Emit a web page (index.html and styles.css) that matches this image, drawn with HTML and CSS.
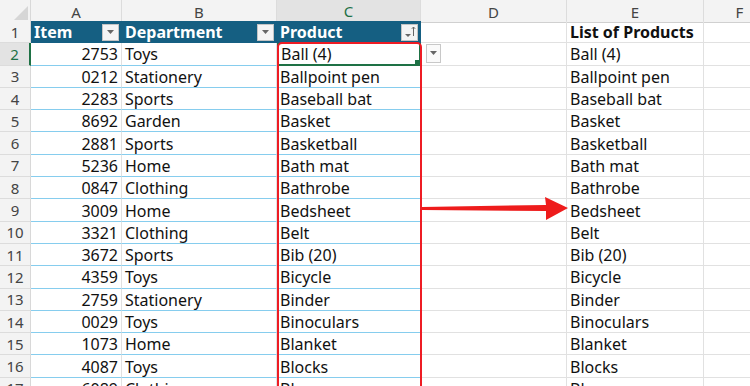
FILE: index.html
```html
<!DOCTYPE html>
<html>
<head>
<meta charset="utf-8">
<link rel="stylesheet" href="styles.css">
</head>
<body>
<div class="sheet">
  <div class="row colhead">
    <div class="corner"><svg class="corner-tri" width="14" height="14" viewBox="0 0 14 14"><polygon points="14,0 14,14 0,14" fill="#d6d6d6"/></svg></div>
    <div class="ch">A</div>
    <div class="ch">B</div>
    <div class="ch sel">C</div>
    <div class="ch">D</div>
    <div class="ch">E</div>
    <div class="ch">F</div>
  </div>
  <div class="row">
    <div class="rh">1</div>
    <div class="c th">Item<span class="fbtn"><svg width="9" height="5" viewBox="0 0 9 5"><polygon points="1,0 8,0 4.5,4" fill="#666"/></svg></span></div>
    <div class="c th">Department<span class="fbtn"><svg width="9" height="5" viewBox="0 0 9 5"><polygon points="1,0 8,0 4.5,4" fill="#666"/></svg></span></div>
    <div class="c th">Product<span class="fbtn sortb"><svg width="14" height="14" viewBox="0 0 14 14"><polygon points="2,9 8,9 5,12" fill="#666"/><path d="M10.5 2 V11 M8.8 3.8 L10.5 2 L12.2 3.8" stroke="#666" stroke-width="1" fill="none"/></svg></span></div>
    <div class="c"></div>
    <div class="c b">List of Products</div>
    <div class="c"></div>
  </div>
  <div class="row"><div class="rh selr">2</div><div class="c t num">2753</div><div class="c t">Toys</div><div class="c t active">Ball (4)<span class="handle"></span></div><div class="c"></div><div class="c">Ball (4)</div><div class="c"></div></div>
  <div class="row"><div class="rh">3</div><div class="c t num">0212</div><div class="c t">Stationery</div><div class="c t">Ballpoint pen</div><div class="c"></div><div class="c">Ballpoint pen</div><div class="c"></div></div>
  <div class="row"><div class="rh">4</div><div class="c t num">2283</div><div class="c t">Sports</div><div class="c t">Baseball bat</div><div class="c"></div><div class="c">Baseball bat</div><div class="c"></div></div>
  <div class="row"><div class="rh">5</div><div class="c t num">8692</div><div class="c t">Garden</div><div class="c t">Basket</div><div class="c"></div><div class="c">Basket</div><div class="c"></div></div>
  <div class="row"><div class="rh">6</div><div class="c t num">2881</div><div class="c t">Sports</div><div class="c t">Basketball</div><div class="c"></div><div class="c">Basketball</div><div class="c"></div></div>
  <div class="row"><div class="rh">7</div><div class="c t num">5236</div><div class="c t">Home</div><div class="c t">Bath mat</div><div class="c"></div><div class="c">Bath mat</div><div class="c"></div></div>
  <div class="row"><div class="rh">8</div><div class="c t num">0847</div><div class="c t">Clothing</div><div class="c t">Bathrobe</div><div class="c"></div><div class="c">Bathrobe</div><div class="c"></div></div>
  <div class="row"><div class="rh">9</div><div class="c t num">3009</div><div class="c t">Home</div><div class="c t">Bedsheet</div><div class="c"></div><div class="c">Bedsheet</div><div class="c"></div></div>
  <div class="row"><div class="rh">10</div><div class="c t num">3321</div><div class="c t">Clothing</div><div class="c t">Belt</div><div class="c"></div><div class="c">Belt</div><div class="c"></div></div>
  <div class="row"><div class="rh">11</div><div class="c t num">3672</div><div class="c t">Sports</div><div class="c t">Bib (20)</div><div class="c"></div><div class="c">Bib (20)</div><div class="c"></div></div>
  <div class="row"><div class="rh">12</div><div class="c t num">4359</div><div class="c t">Toys</div><div class="c t">Bicycle</div><div class="c"></div><div class="c">Bicycle</div><div class="c"></div></div>
  <div class="row"><div class="rh">13</div><div class="c t num">2759</div><div class="c t">Stationery</div><div class="c t">Binder</div><div class="c"></div><div class="c">Binder</div><div class="c"></div></div>
  <div class="row"><div class="rh">14</div><div class="c t num">0029</div><div class="c t">Toys</div><div class="c t">Binoculars</div><div class="c"></div><div class="c">Binoculars</div><div class="c"></div></div>
  <div class="row"><div class="rh">15</div><div class="c t num">1073</div><div class="c t">Home</div><div class="c t">Blanket</div><div class="c"></div><div class="c">Blanket</div><div class="c"></div></div>
  <div class="row"><div class="rh">16</div><div class="c t num">4087</div><div class="c t">Toys</div><div class="c t">Blocks</div><div class="c"></div><div class="c">Blocks</div><div class="c"></div></div>
  <div class="row"><div class="rh">17</div><div class="c t num">6089</div><div class="c t">Clothing</div><div class="c t">Blouse</div><div class="c"></div><div class="c">Blouse</div><div class="c"></div></div>
</div>
<div class="redbox"></div>
<svg class="arrow" width="150" height="26" viewBox="0 0 150 26">
  <polygon points="0,10 124,8 123,0 146,11 124,23 124,14 0,13" fill="#ee1c1c"/>
</svg>
<div class="dvbtn"><svg width="9" height="5" viewBox="0 0 9 5"><polygon points="1,0 8,0 4.5,4" fill="#666"/></svg></div>
</body>
</html>
```

FILE: styles.css
```css
html, body {
  margin: 0;
  padding: 0;
  background: #ffffff;
  overflow: hidden;
}
body {
  width: 750px;
  height: 386px;
  position: relative;
  font-family: "Noto Sans", "Liberation Sans", sans-serif;
  color: #111;
}
.sheet {
  display: flex;
  flex-direction: column;
}
.row {
  display: grid;
  grid-template-columns: 31px 91px 155px 144px 146px 137px 72px;
  height: 22.3px;
  flex: none;
}
.colhead {
  height: 21px;
}
.corner {
  background: #f3f3f3;
  border-right: 1px solid #d8d8d8;
  border-bottom: 1px solid #d8d8d8;
  box-sizing: border-box;
  display: flex;
  align-items: flex-end;
  justify-content: flex-end;
  padding: 0 2px 2px 0;
}
.ch {
  background: #f3f3f3;
  border-right: 1px solid #dcdcdc;
  border-bottom: 1px solid #d0d0d0;
  box-sizing: border-box;
  color: #444;
  font-size: 15px;
  display: flex;
  align-items: center;
  justify-content: center;
  padding-top: 1px;
}
.ch.sel {
  background: #e3e3e3;
  color: #1e7145;
  border-bottom: 2px solid #1e7145;
}
.rh {
  background: #f3f3f3;
  border-right: 1px solid #d8d8d8;
  border-bottom: 1px solid #dcdcdc;
  box-sizing: border-box;
  color: #444;
  font-size: 15px;
  display: flex;
  align-items: center;
  justify-content: center;
}
.rh.selr {
  background: #e3e3e3;
  color: #1e7145;
  border-right: 2px solid #1e7145;
}
.c {
  border-right: 1px solid #e1e1e1;
  border-bottom: 1px solid #e1e1e1;
  box-sizing: border-box;
  font-size: 16px;
  display: flex;
  align-items: center;
  padding: 1px 3px 0 3px;
  white-space: nowrap;
  overflow: hidden;
  position: relative;
}
.c.b {
  font-weight: 700;
}
.c.th {
  background: #155f82;
  color: #ffffff;
  font-weight: 700;
  border-right: 1px solid #155f82;
  border-bottom: 1px solid #155f82;
  justify-content: space-between;
  padding-right: 2px;
}
.c.t {
  border-bottom: 1px solid #86cdee;
}
.c.num {
  justify-content: flex-end;
}
.fbtn {
  width: 17px;
  height: 17px;
  box-sizing: border-box;
  background: #f4f4f4;
  border: 1px solid #c4c4c4;
  display: flex;
  align-items: center;
  justify-content: center;
}
.sortb {
  align-items: center;
}
.c.active {
  border: 2px solid #1e7145;
  border-top: 0;
  padding-left: 2px;
}
.handle {
  position: absolute;
  right: -3px;
  bottom: -3px;
  width: 6px;
  height: 6px;
  background: #1e7145;
  border: 1px solid #fff;
}
.redbox {
  position: absolute;
  left: 277px;
  top: 42px;
  width: 145px;
  height: 360px;
  box-sizing: border-box;
  border: 2px solid #ee1c24;
  border-radius: 5px;
}
.arrow {
  position: absolute;
  left: 422px;
  top: 197px;
}
.dvbtn {
  position: absolute;
  left: 426px;
  top: 44px;
  width: 15px;
  height: 19px;
  box-sizing: border-box;
  background: #fafafa;
  border: 1px solid #c8c8c8;
  display: flex;
  align-items: center;
  justify-content: center;
}
```
